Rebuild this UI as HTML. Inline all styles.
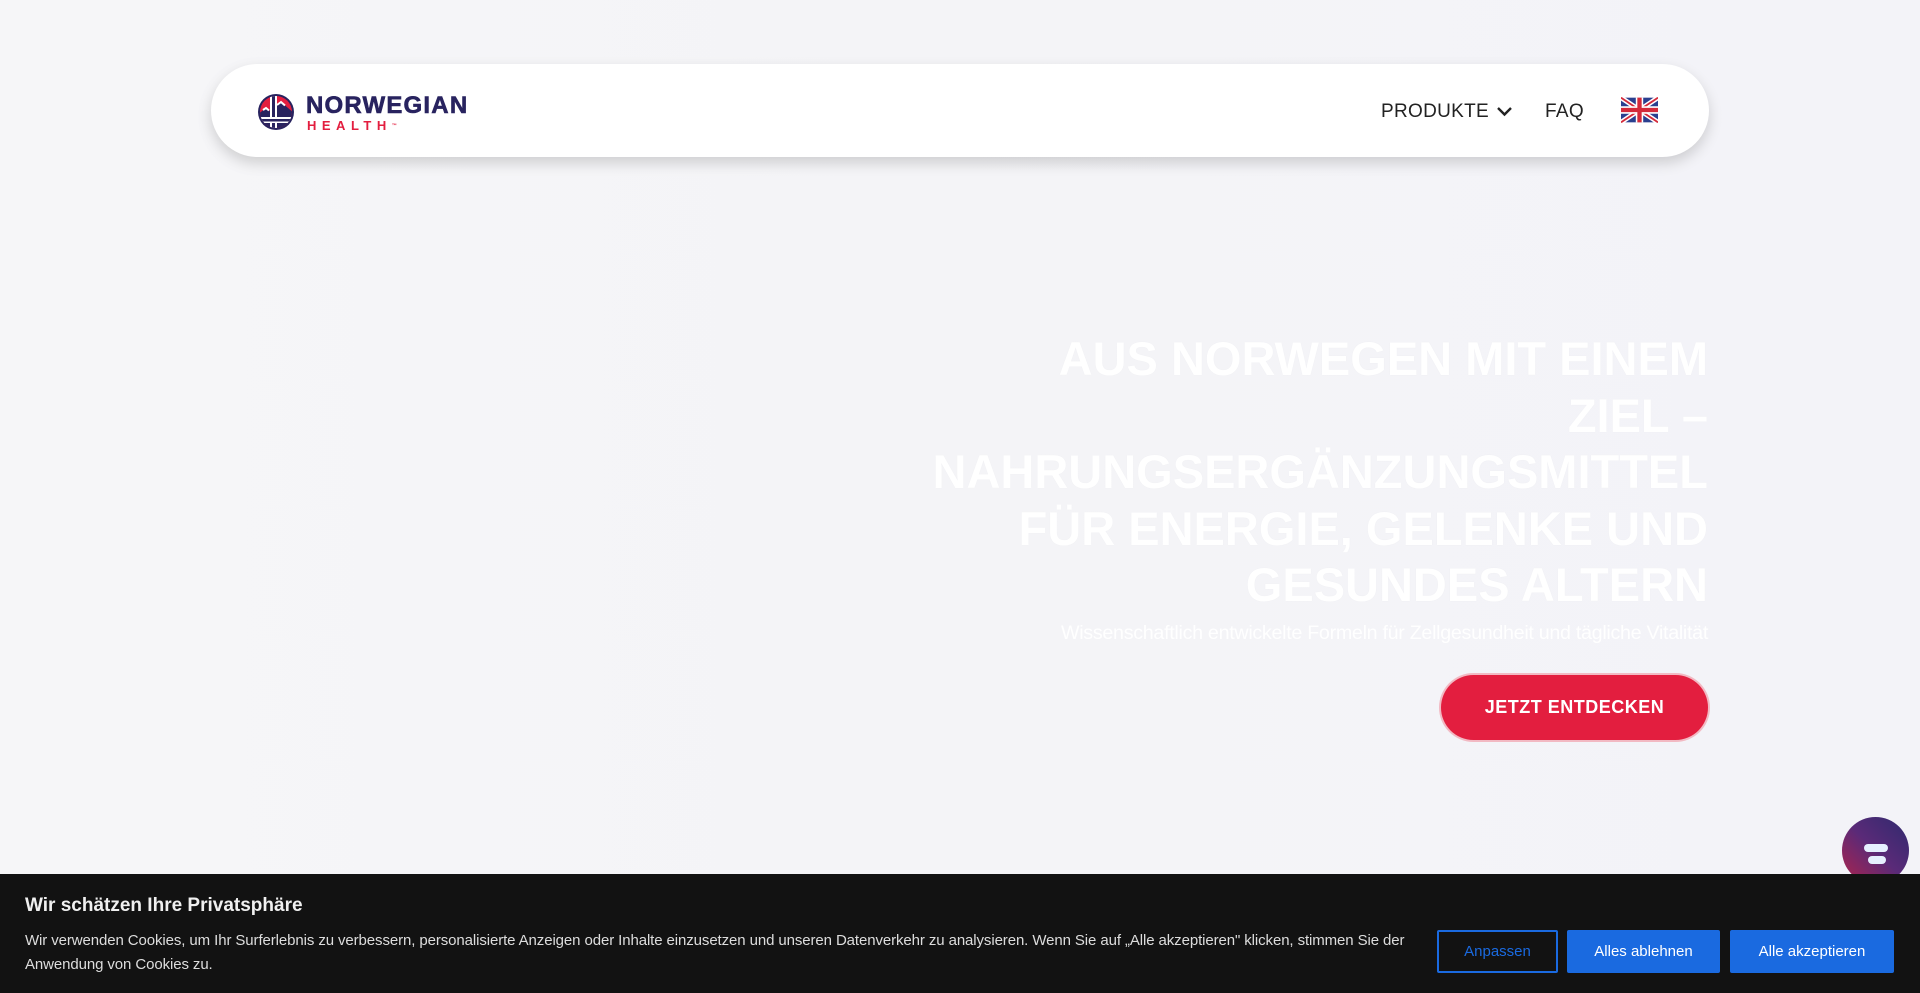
<!DOCTYPE html>
<html><head><meta charset="utf-8"><style>
*{margin:0;padding:0;box-sizing:border-box}
body{width:1920px;height:993px;overflow:hidden;background:linear-gradient(90deg,#f6f6f8 0%,#f4f4f7 50%,#f3f3f8 100%);font-family:"Liberation Sans",sans-serif;position:relative}
.nav{position:absolute;left:211px;top:64px;width:1498px;height:93px;background:#fff;border-radius:47px;box-shadow:0 6px 14px rgba(0,0,0,.16)}
.logo{position:absolute;left:257px;top:93px}
.nw{position:absolute;left:306px;top:93px;font-weight:bold;font-size:24px;color:#28235f;letter-spacing:1.2px;line-height:26px;-webkit-text-stroke:.6px #28235f}
.hl{position:absolute;left:307px;top:119px;font-weight:bold;font-size:13px;color:#e31e3f;letter-spacing:5.5px;line-height:14px}
.ni{position:absolute;top:100px;font-size:19px;color:#222;line-height:24px;letter-spacing:.3px}
.h1{position:absolute;right:212px;top:331px;width:900px;text-align:right;font-weight:bold;font-size:47px;line-height:56.5px;color:#fff;text-shadow:0 0 1px rgba(0,0,0,.04)}
.sub{position:absolute;right:212px;top:622px;font-size:19.7px;color:#fff;letter-spacing:-.3px}
.btn{position:absolute;left:1441px;top:675px;width:267px;height:65px;background:#e31e3f;border-radius:33px;color:#fff;font-size:18px;font-weight:bold;text-align:center;line-height:65px;letter-spacing:.5px;box-shadow:0 0 0 2px #f2b9c3}
.chat{position:absolute;left:1842px;top:817px;width:67px;height:67px;border-radius:50%;background:linear-gradient(45deg,#b0234b,#5a2a78 50%,#2f2a6e)}
.chat i{position:absolute;height:8px;border-radius:4px;background:#e6f0ff}
.ck{position:absolute;left:0;top:874px;width:1920px;height:119px;background:#121212;color:#ddd}
.ck h3{position:absolute;left:25px;top:21px;font-size:19px;color:#f0f0f0}
.ck p{position:absolute;left:25px;top:55px;width:1410px;font-size:15px;line-height:24px;color:#ddd;letter-spacing:-.1px}
.b{position:absolute;top:56px;height:43px;font-size:15px;line-height:43px;text-align:center;border-radius:2px;color:#fff;background:#1a6ae0}
</style></head><body>
<div class="nav"></div>
<svg class="logo" width="38" height="38" viewBox="0 0 38 38">
<defs><clipPath id="c"><circle cx="19" cy="19" r="16"/></clipPath></defs>
<circle cx="19" cy="19" r="18" fill="#28235f"/>
<g clip-path="url(#c)">
<rect x="0" y="0" width="38" height="38" fill="#e31e3f"/>
<path d="M0 22 L9 15 L13 18 L24 9 L38 21 L38 38 L0 38Z" fill="#28235f"/>
<path d="M6 17 L9 15 L12 17.5 M20 12 L24 9 L28 12.5" stroke="#fff" stroke-width="2" fill="none"/>
<rect x="13" y="0" width="7" height="38" fill="#fff"/>
<rect x="15" y="0" width="3" height="38" fill="#28235f"/>
<rect x="0" y="24" width="38" height="6" fill="#fff"/>
<rect x="0" y="26" width="38" height="2.5" fill="#28235f"/>
</g></svg>
<div class="nw">NORWEGIAN</div>
<div class="hl">HEALTH<span style="font-size:5px;letter-spacing:0;vertical-align:top">™</span></div>
<div class="ni" style="left:1381px">PRODUKTE</div>
<svg style="position:absolute;left:1496px;top:106px" width="17" height="11" viewBox="0 0 17 11"><path d="M2 2 L8.5 8.5 L15 2" stroke="#222" stroke-width="2.4" fill="none"/></svg>
<div class="ni" style="left:1545px">FAQ</div>
<svg style="position:absolute;left:1621px;top:97px" width="37" height="26" viewBox="0 0 60 40">
<rect width="60" height="40" fill="#2a3f8f"/>
<path d="M0 0L60 40M60 0L0 40" stroke="#fff" stroke-width="8"/>
<path d="M0 0L60 40M60 0L0 40" stroke="#d42a3a" stroke-width="3"/>
<path d="M30 0V40M0 20H60" stroke="#fff" stroke-width="12"/>
<path d="M30 0V40M0 20H60" stroke="#d42a3a" stroke-width="7"/>
</svg>
<div class="h1">AUS NORWEGEN MIT EINEM<br>ZIEL –<br>NAHRUNGSERGÄNZUNGSMITTEL<br>FÜR ENERGIE, GELENKE UND<br>GESUNDES ALTERN</div>
<div class="sub">Wissenschaftlich entwickelte Formeln für Zellgesundheit und tägliche Vitalität</div>
<div class="btn">JETZT ENTDECKEN</div>
<div class="chat"><i style="left:22px;top:27px;width:24px"></i><i style="left:26px;top:39px;width:18px"></i></div>
<div class="ck">
<h3>Wir schätzen Ihre Privatsphäre</h3>
<p>Wir verwenden Cookies, um Ihr Surferlebnis zu verbessern, personalisierte Anzeigen oder Inhalte einzusetzen und unseren Datenverkehr zu analysieren. Wenn Sie auf „Alle akzeptieren" klicken, stimmen Sie der Anwendung von Cookies zu.</p>
<div class="b" style="left:1437px;width:121px;background:transparent;border:2px solid #1a6ae0;color:#1a6ae0;line-height:39px">Anpassen</div>
<div class="b" style="left:1567px;width:153px">Alles ablehnen</div>
<div class="b" style="left:1730px;width:164px">Alle akzeptieren</div>
</div>
</body></html>
